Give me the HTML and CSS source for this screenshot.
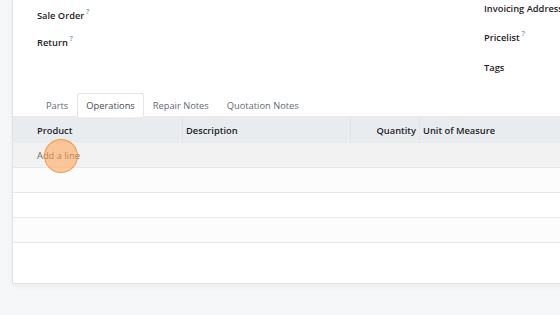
FILE: index.html
```html
<!DOCTYPE html>
<html>
<head>
<meta charset="utf-8">
<link rel="stylesheet" href="styles.css">
</head>
<body>
<div class="card">
  <div class="fields">
    <div class="col left">
      <div class="field f1"><span class="label">Sale Order</span><sup class="help">?</sup></div>
      <div class="field f2"><span class="label">Return</span><sup class="help">?</sup></div>
    </div>
    <div class="col right">
      <div class="field r1"><span class="label">Invoicing Address</span></div>
      <div class="field r2"><span class="label">Pricelist</span><sup class="help">?</sup></div>
      <div class="field r3"><span class="label">Tags</span></div>
    </div>
  </div>
  <div class="tabs">
    <div class="tab">Parts</div>
    <div class="tab active">Operations</div>
    <div class="tab">Repair Notes</div>
    <div class="tab">Quotation Notes</div>
  </div>
  <div class="table">
    <div class="row head">
      <div class="cell c-product">Product</div>
      <div class="cell c-desc">Description</div>
      <div class="cell c-qty">Quantity</div>
      <div class="cell c-uom">Unit of Measure</div>
    </div>
    <div class="row add"><div class="cell c-product add-link">Add a line</div></div>
    <div class="row r-alt"></div>
    <div class="row r-white"></div>
    <div class="row r-alt"></div>
    <div class="spacer"></div>
  </div>
  <div class="click"></div>
</div>
</body>
</html>
```
FILE: styles.css
```css
* { box-sizing: border-box; }
html, body { margin: 0; padding: 0; }
body {
  background: #f6f7f9;
  font-family: "Open Sans", "Noto Sans", sans-serif;
  font-size: 9.3px;
  color: #1f2226;
  width: 560px;
  height: 315px;
  overflow: hidden;
}
.card {
  position: relative;
  margin-left: 12px;
  width: 620px;
  height: 284px;
  background: #fff;
  border-left: 1px solid #dee2e6;
  border-bottom: 1px solid #e2e4e7;
  box-shadow: 0 3px 6px rgba(0,0,0,0.04);
}
.fields {
  display: flex;
  height: 93px;
}
.col { display: flex; flex-direction: column; }
.left { width: 471px; padding-left: 24px; }
.right { flex: 1; white-space: nowrap; }
.field { display: flex; align-items: flex-start; font-weight: 600; }
.label { line-height: 14px; }
.help {
  font-size: 6.5px;
  color: #6b8fb0;
  font-weight: 600;
  margin-left: 2px;
  line-height: 8px;
  margin-top: -1px;
}
.f1 { margin-top: 9px; }
.f2 { margin-top: 13px; }
.r1 { margin-top: 2px; }
.r2 { margin-top: 15px; }
.r3 { margin-top: 16px; }
.tabs {
  display: flex;
  height: 24px;
  padding-left: 24px;
  border-bottom: 1px solid #e7e9ec;
}
.tab {
  padding: 0 8px;
  line-height: 23px;
  color: #626a72;
  border: 1px solid transparent;
  border-bottom: none;
  border-radius: 3px 3px 0 0;
}
.tab.active {
  color: #454c53;
  border-color: #e3e6e9;
  background: #fff;
  margin-bottom: -1px;
  height: 25px;
}
.table { display: flex; flex-direction: column; }
.row {
  display: flex;
  height: 25px;
  border-bottom: 1px solid #e8e8e8;
}
.head {
  height: 26px;
  background: #e9ecef;
  border-bottom: none;
  font-weight: 600;
}
.cell {
  display: flex;
  align-items: center;
  border-left: 1px solid #dfe3e7;
}
.head .cell { border-left: 1px solid #e1e5e9; }
.c-product { width: 169px; padding-left: 24px; border-left: none !important; }
.c-desc { width: 168px; padding-left: 3px; }
.c-qty { width: 69px; justify-content: flex-end; padding-right: 3px; }
.c-uom { flex: 1; padding-left: 3px; }
.add { background: #f2f2f2; }
.add-link { color: #6a6a6a; font-weight: 400; }
.r-alt { background: #fcfcfc; }
.r-white { background: #fff; }
.spacer { height: 42px; }
.click {
  position: absolute;
  left: 31px;
  top: 139px;
  width: 34px;
  height: 34px;
  border-radius: 50%;
  background: rgba(255, 160, 80, 0.55);
  border: 1px solid rgba(245, 140, 50, 0.8);
}
```
